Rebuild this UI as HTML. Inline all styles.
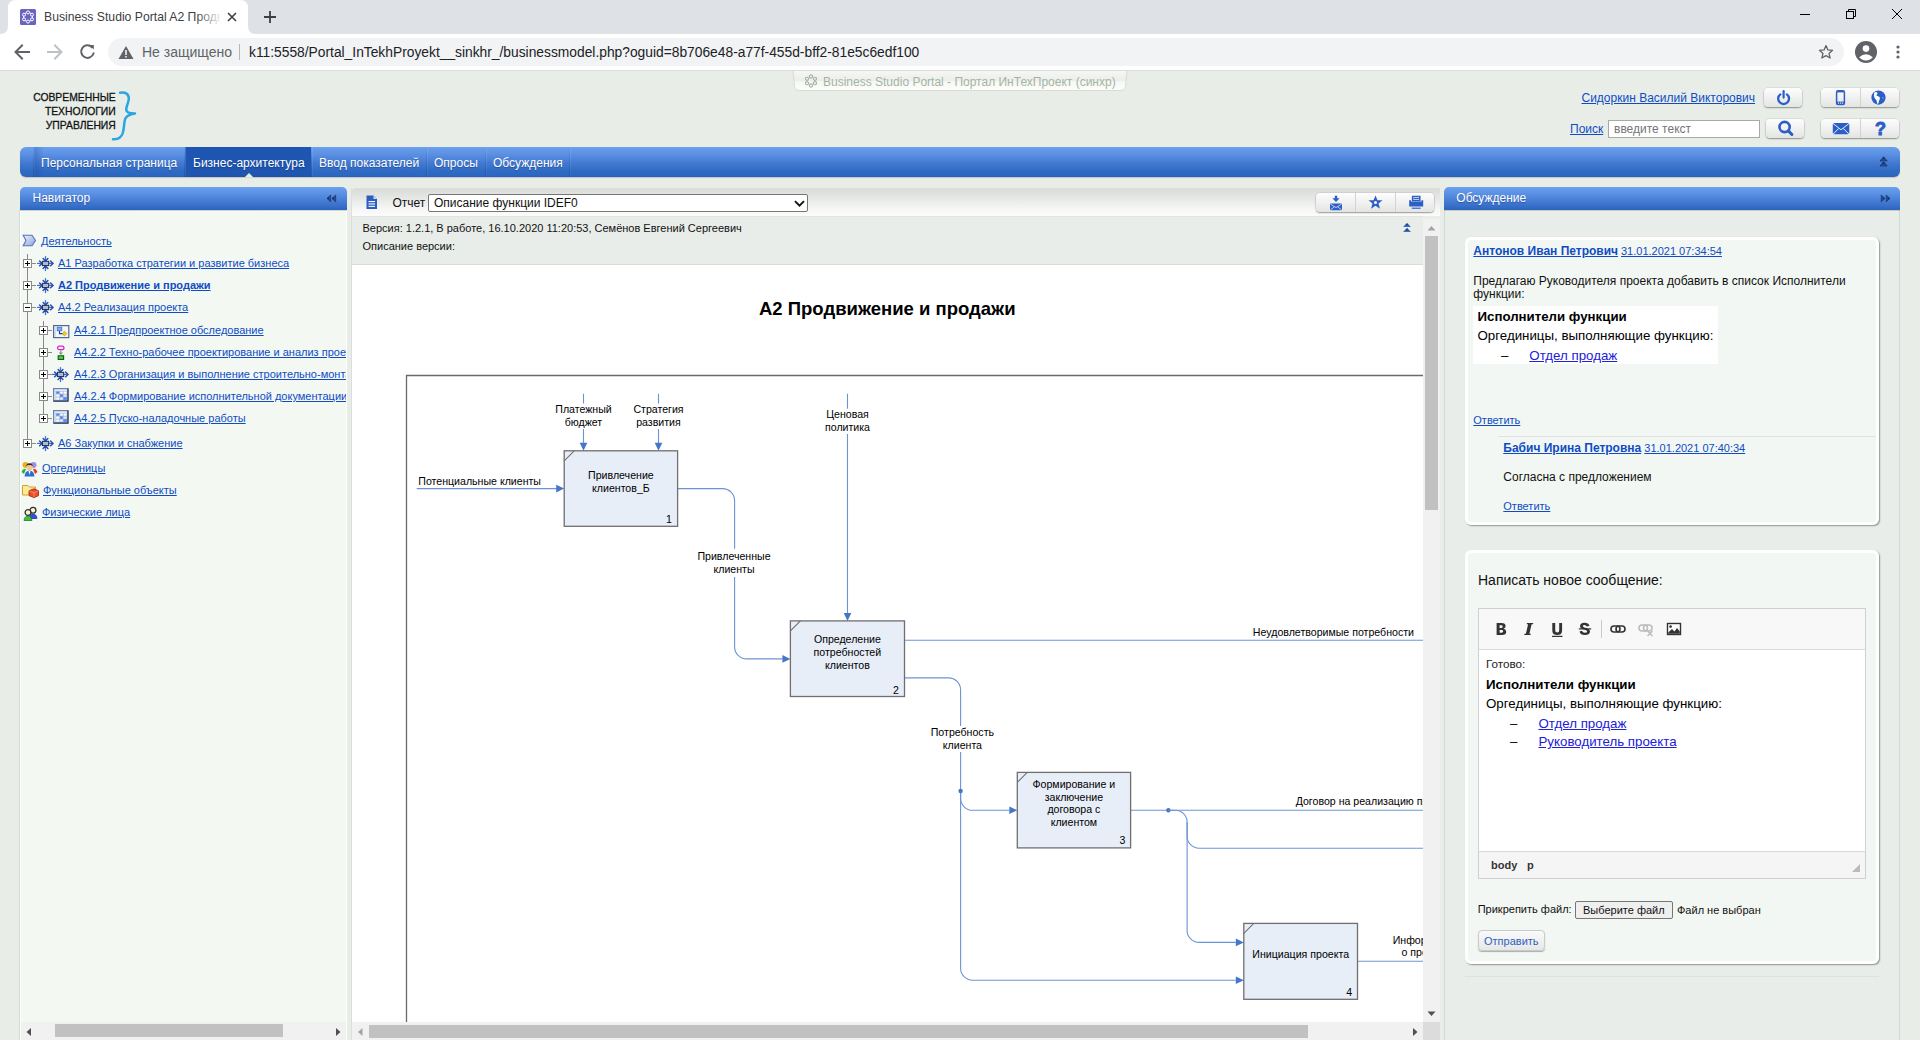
<!DOCTYPE html><html><head><meta charset="utf-8"><title>Business Studio Portal</title><style>
*{margin:0;padding:0;box-sizing:border-box}
html,body{width:1920px;height:1040px;overflow:hidden;background:#e8ede8;font-family:"Liberation Sans",sans-serif}
.t{position:absolute;white-space:nowrap}
.r{position:absolute}
.u{text-decoration:underline}
svg{position:absolute;overflow:visible}
</style></head><body>
<div class="r" style="left:0px;top:0px;width:1920px;height:34px;background:#dee1e6"></div>
<svg style="left:0;top:0" width="260" height="35"><path d="M0 34 Q8 34 8 26 L8 8 Q8 0 16 0 L240 0 Q248 0 248 8 L248 26 Q248 34 256 34 Z" fill="#fff"/></svg>
<svg style="left:20px;top:9px" width="16" height="16" viewBox="0 0 16 16"><rect x="0" y="0" width="16" height="16" rx="1.5" fill="#6a63c0"/>
<g fill="#6a63c0" stroke="#fff" stroke-width="1"><circle cx="8" cy="8" r="4.6" fill="none"/><circle cx="8" cy="3.4" r="1.5"/><circle cx="8" cy="12.6" r="1.5"/><circle cx="4" cy="5.7" r="1.5"/><circle cx="12" cy="5.7" r="1.5"/><circle cx="4" cy="10.3" r="1.5"/><circle cx="12" cy="10.3" r="1.5"/></g></svg>
<div class="t" style="left:44px;top:9px;width:176px;overflow:hidden;font-size:12.2px;line-height:16px;color:#3c4043">Business Studio Portal A2 Продвижение</div>
<div class="r" style="left:196px;top:5px;width:26px;height:22px;background:linear-gradient(90deg,rgba(255,255,255,0),#fff)"></div>
<svg style="left:227px;top:12px" width="10" height="10"><path d="M1 1 L9 9 M9 1 L1 9" stroke="#3c4043" stroke-width="1.6"/></svg>
<svg style="left:263px;top:10px" width="14" height="14"><path d="M7 1 V13 M1 7 H13" stroke="#3c4043" stroke-width="1.8"/></svg>
<svg style="left:1795px;top:5px" width="115" height="22"><g stroke="#000" stroke-width="1" fill="none">
<path d="M5 9.5 H15"/>
<rect x="51.5" y="6.5" width="7" height="7"/><path d="M53.5 6.5 V4.5 H60.5 V11.5 H58.5"/>
<path d="M97 4 L107 14 M107 4 L97 14"/></g></svg>
<div class="r" style="left:0px;top:34px;width:1920px;height:37px;background:#fff"></div>
<div class="r" style="left:0px;top:70px;width:1920px;height:1px;background:#dadce0"></div>
<svg style="left:12px;top:42px" width="90" height="20"><g fill="none" stroke-width="2" stroke-linecap="square">
<path d="M4 10 H17 M10 3.5 L3.5 10 L10 16.5" stroke="#5f6368"/>
<path d="M36 10 H49 M43 3.5 L49.5 10 L43 16.5" stroke="#bdc1c6"/>
<path d="M80 5.2 A6.3 6.3 0 1 0 81.5 11.5" stroke="#5f6368"/></g>
<path d="M77 3 L81.5 3 L81.5 7.5 Z" fill="#5f6368" transform="translate(0.3,0)"/></svg>
<div class="r" style="left:108px;top:38px;width:1736px;height:28px;background:#f1f3f4;border-radius:14px"></div>
<svg style="left:118px;top:45px" width="16" height="15"><path d="M8 1 L15.5 14 H0.5 Z" fill="#5f6368"/><rect x="7.2" y="5" width="1.6" height="5" fill="#f1f3f4"/><rect x="7.2" y="11" width="1.6" height="1.6" fill="#f1f3f4"/></svg>
<div class="t " style="left:142px;top:44px;font-size:14px;line-height:17px;color:#5f6368;font-weight:normal;">Не защищено</div>
<div class="r" style="left:239px;top:44px;width:1px;height:16px;background:#b4b8bc"></div>
<div class="t " style="left:249px;top:45px;font-size:13.8px;line-height:16px;color:#202124;font-weight:normal;">k11:5558/Portal_InTekhProyekt__sinkhr_/businessmodel.php?oguid=8b706e48-a77f-455d-bff2-81e5c6edf100</div>
<svg style="left:1818px;top:44px" width="16" height="16" viewBox="0 0 16 16"><path d="M8 1.6 L9.9 5.9 L14.6 6.3 L11 9.4 L12.1 14 L8 11.6 L3.9 14 L5 9.4 L1.4 6.3 L6.1 5.9 Z" fill="none" stroke="#5f6368" stroke-width="1.3" stroke-linejoin="round"/></svg>
<svg style="left:1855px;top:41px" width="22" height="22" viewBox="0 0 22 22"><circle cx="11" cy="11" r="11" fill="#5f6368"/><circle cx="11" cy="7.6" r="3.3" fill="#fff"/><path d="M4.2 16.2 Q11 10.5 17.8 16.2 Q15.5 19.3 11 19.4 Q6.5 19.3 4.2 16.2 Z" fill="#fff"/></svg>
<svg style="left:1895px;top:44px" width="6" height="16"><circle cx="3" cy="3" r="1.6" fill="#5f6368"/><circle cx="3" cy="8" r="1.6" fill="#5f6368"/><circle cx="3" cy="13" r="1.6" fill="#5f6368"/></svg>
<div class="t " style="right:1804px;text-align:right;top:90px;font-size:11.5px;line-height:14px;color:#111;font-weight:normal;transform:scaleX(0.9);transform-origin:100% 50%;-webkit-text-stroke:0.3px #111;">СОВРЕМЕННЫЕ</div>
<div class="t " style="right:1804px;text-align:right;top:104px;font-size:11.5px;line-height:14px;color:#111;font-weight:normal;transform:scaleX(0.9);transform-origin:100% 50%;-webkit-text-stroke:0.3px #111;">ТЕХНОЛОГИИ</div>
<div class="t " style="right:1804px;text-align:right;top:118px;font-size:11.5px;line-height:14px;color:#111;font-weight:normal;transform:scaleX(0.9);transform-origin:100% 50%;-webkit-text-stroke:0.3px #111;">УПРАВЛЕНИЯ</div>
<svg style="left:108px;top:88px" width="32" height="56" viewBox="0 0 32 56"><path d="M12 4.8 C17.5 3.8 20.8 6 20.8 10.5 C20.8 14 18.8 17.5 18.3 20.5 C17.8 24 20 25.3 27 25.5 C20.5 26.5 17.6 28.5 16.8 32 C16 36 16 41 14.8 45 C13.6 49 10.5 51.5 5 51.2" fill="none" stroke="#2aa6e3" stroke-width="2.5" stroke-linecap="round" stroke-linejoin="round"/></svg>
<svg style="left:792px;top:70px" width="338" height="23"><defs><linearGradient id="tg" x1="0" y1="0" x2="0" y2="1"><stop offset="0" stop-color="#f6f7f4"/><stop offset="0.5" stop-color="#eceeea"/><stop offset="0.55" stop-color="#f7f8f6"/><stop offset="1" stop-color="#fdfdfc"/></linearGradient></defs>
<path d="M1 1 L2.5 17 Q3 20.5 7 20.5 L329 20.5 Q333 20.5 333.5 17 L335 1" fill="url(#tg)" stroke="#d6dbd3" stroke-width="1"/></svg>
<svg style="left:804px;top:74px" width="14" height="14" viewBox="0 0 14 14"><g fill="none" stroke="#a2b4a0" stroke-width="1.1"><circle cx="7" cy="2.5" r="1.6"/><circle cx="7" cy="11.5" r="1.6"/><circle cx="3" cy="4.8" r="1.6"/><circle cx="11" cy="4.8" r="1.6"/><circle cx="3" cy="9.2" r="1.6"/><circle cx="11" cy="9.2" r="1.6"/></g></svg>
<div class="t " style="left:823px;top:75px;font-size:12px;line-height:14px;color:#a3b5a2;font-weight:normal;">Business Studio Portal - Портал ИнТехПроект (синхр)</div>
<div class="t u" style="left:1581.5px;top:91px;font-size:12px;line-height:14px;color:#0f4cc4;font-weight:normal;">Сидоркин Василий Викторович</div>
<div class="t u" style="left:1570px;top:122px;font-size:12px;line-height:14px;color:#0f4cc4;font-weight:normal;">Поиск</div>
<div class="r" style="left:1608px;top:120px;width:152px;height:18px;background:#fff;border:1px solid #a9a9a9;"></div>
<div class="t " style="left:1614px;top:122px;font-size:12px;line-height:14px;color:#757575;font-weight:normal;">введите текст</div>
<div class="r" style="left:1764px;top:88px;width:38px;height:19px;background:linear-gradient(#fdfdfd,#e3e5e3);border-radius:4px;box-shadow:0 1px 1.5px rgba(0,0,0,.35),0 0 0 0.5px rgba(0,0,0,.12);"></div>
<div class="r" style="left:1821px;top:88px;width:78px;height:19px;background:linear-gradient(#fdfdfd,#e3e5e3);border-radius:4px;box-shadow:0 1px 1.5px rgba(0,0,0,.35),0 0 0 0.5px rgba(0,0,0,.12);"></div>
<div class="r" style="left:1860px;top:88px;width:1px;height:19px;background:#fff;border-left:1px solid #d0d3d0"></div>
<div class="r" style="left:1766px;top:119px;width:38px;height:19px;background:linear-gradient(#fdfdfd,#e3e5e3);border-radius:4px;box-shadow:0 1px 1.5px rgba(0,0,0,.35),0 0 0 0.5px rgba(0,0,0,.12);"></div>
<div class="r" style="left:1821px;top:119px;width:78px;height:19px;background:linear-gradient(#fdfdfd,#e3e5e3);border-radius:4px;box-shadow:0 1px 1.5px rgba(0,0,0,.35),0 0 0 0.5px rgba(0,0,0,.12);"></div>
<div class="r" style="left:1860px;top:119px;width:1px;height:19px;background:#fff;border-left:1px solid #d0d3d0"></div>
<svg style="left:1775px;top:89px" width="17" height="17" viewBox="0 0 17 17"><path d="M5.3 5.4 A5.4 5.4 0 1 0 11.9 5.4" fill="none" stroke="#2b5fc7" stroke-width="2.3" stroke-linecap="round"/><path d="M8.6 2.2 V8.6" stroke="#2b5fc7" stroke-width="2.2" stroke-linecap="round"/></svg>
<svg style="left:1835px;top:89px" width="11" height="17" viewBox="0 0 11 17"><rect x="1.6" y="1.8" width="7.8" height="13.7" rx="1.6" fill="none" stroke="#2b5fc7" stroke-width="1.5"/><rect x="1.6" y="1.8" width="7.8" height="1.6" fill="#2b5fc7"/><rect x="1.6" y="12.6" width="7.8" height="2.9" fill="#2b5fc7"/><g fill="#fff"><rect x="3" y="13.6" width="1.1" height="1"/><rect x="5" y="13.6" width="1.1" height="1"/><rect x="7" y="13.6" width="1.1" height="1"/></g></svg>
<svg style="left:1870px;top:89px" width="17" height="17" viewBox="0 0 17 17"><circle cx="8.5" cy="8.6" r="7.1" fill="#2b5fc7"/><path d="M4.6 3.2 Q6.8 2.8 7.6 4.2 Q7.2 5.6 6.2 6.3 Q7.5 7.2 8.8 7.6 Q10.6 8.5 9.8 10.3 Q8.8 11.6 8.6 13.4 Q8.1 14.8 7.6 15.3 Q6.6 13.2 6.6 11.2 Q5.2 9.8 4.4 8.4 Q3.6 6.6 4.1 4.6 Z" fill="#fff"/><path d="M12.6 7.8 Q13.6 8.6 13.2 10 Q12.4 9.4 12.6 7.8 Z" fill="#fff"/></svg>
<svg style="left:1776px;top:119px" width="19" height="19" viewBox="0 0 19 19"><circle cx="8.6" cy="8" r="5.1" fill="none" stroke="#2b5fc7" stroke-width="2.6"/><path d="M12.4 11.9 L15.9 15.5" stroke="#2b5fc7" stroke-width="3" stroke-linecap="round"/></svg>
<svg style="left:1832px;top:122px" width="18" height="14" viewBox="0 0 18 14"><rect x="0.8" y="1" width="16.5" height="11.3" rx="1.5" fill="#2b5fc7"/><path d="M1.2 1.6 L9 7.8 L16.9 1.6 M1.3 12 L6.6 6.5 M16.8 12 L11.4 6.5" fill="none" stroke="#fff" stroke-width="0.9"/></svg>
<div class="t " style="left:1875px;top:119px;font-size:18px;line-height:21px;color:#2b5fc7;font-weight:bold;-webkit-text-stroke:0.9px #2b5fc7;">?</div>
<div class="r" style="left:20px;top:147px;width:1880px;height:30px;background:linear-gradient(#6aa0ee 0%,#5a8fe2 25%,#4279d0 55%,#2f6bc3 80%,#2b66c0 96%,#2160c8 100%);border-radius:6px;box-shadow:0 1px 1px rgba(90,80,40,.25)"></div>
<div class="r" style="left:185px;top:147px;width:126px;height:30px;background:linear-gradient(#1f55b2,#1e56b0 90%,#1d52ac)"></div>
<svg style="left:244px;top:172px" width="10" height="6"><path d="M0.5 5.5 L5 1 L9.5 5.5 Z" fill="#e8ede8"/></svg>
<div class="r" style="left:33px;top:147px;width:1px;height:30px;background:linear-gradient(rgba(40,80,160,.0),rgba(30,70,150,.45))"></div>
<div class="r" style="left:34px;top:147px;width:1px;height:30px;background:linear-gradient(rgba(140,180,240,.35),rgba(100,150,220,.15))"></div>
<div class="r" style="left:184px;top:147px;width:1px;height:30px;background:linear-gradient(rgba(40,80,160,.0),rgba(30,70,150,.45))"></div>
<div class="r" style="left:185px;top:147px;width:1px;height:30px;background:linear-gradient(rgba(140,180,240,.35),rgba(100,150,220,.15))"></div>
<div class="r" style="left:311px;top:147px;width:1px;height:30px;background:linear-gradient(rgba(40,80,160,.0),rgba(30,70,150,.45))"></div>
<div class="r" style="left:312px;top:147px;width:1px;height:30px;background:linear-gradient(rgba(140,180,240,.35),rgba(100,150,220,.15))"></div>
<div class="r" style="left:426px;top:147px;width:1px;height:30px;background:linear-gradient(rgba(40,80,160,.0),rgba(30,70,150,.45))"></div>
<div class="r" style="left:427px;top:147px;width:1px;height:30px;background:linear-gradient(rgba(140,180,240,.35),rgba(100,150,220,.15))"></div>
<div class="r" style="left:485px;top:147px;width:1px;height:30px;background:linear-gradient(rgba(40,80,160,.0),rgba(30,70,150,.45))"></div>
<div class="r" style="left:486px;top:147px;width:1px;height:30px;background:linear-gradient(rgba(140,180,240,.35),rgba(100,150,220,.15))"></div>
<div class="r" style="left:569px;top:147px;width:1px;height:30px;background:linear-gradient(rgba(40,80,160,.0),rgba(30,70,150,.45))"></div>
<div class="r" style="left:570px;top:147px;width:1px;height:30px;background:linear-gradient(rgba(140,180,240,.35),rgba(100,150,220,.15))"></div>
<div class="r" style="left:34px;top:147px;width:10px;height:30px;background:linear-gradient(90deg,rgba(20,60,150,.28),rgba(20,60,150,0))"></div>
<div class="t " style="left:41px;top:156px;font-size:12px;line-height:14px;color:#fff;font-weight:normal;text-shadow:0 1px 1px rgba(0,20,80,.35)">Персональная страница</div>
<div class="t " style="left:193px;top:156px;font-size:12px;line-height:14px;color:#fff;font-weight:normal;text-shadow:0 1px 1px rgba(0,20,80,.35)">Бизнес-архитектура</div>
<div class="t " style="left:319px;top:156px;font-size:12px;line-height:14px;color:#fff;font-weight:normal;text-shadow:0 1px 1px rgba(0,20,80,.35)">Ввод показателей</div>
<div class="t " style="left:434px;top:156px;font-size:12px;line-height:14px;color:#fff;font-weight:normal;text-shadow:0 1px 1px rgba(0,20,80,.35)">Опросы</div>
<div class="t " style="left:493px;top:156px;font-size:12px;line-height:14px;color:#fff;font-weight:normal;text-shadow:0 1px 1px rgba(0,20,80,.35)">Обсуждения</div>
<svg style="left:1879px;top:156px" width="10" height="12"><defs><linearGradient id="cu" x1="0" y1="0" x2="0" y2="1"><stop offset="0" stop-color="#0d1f44"/><stop offset="1" stop-color="#2a62c0"/></linearGradient></defs><path d="M1 5 L4.6 0.8 L8.2 5 Z" fill="url(#cu)" stroke="#12254d" stroke-width="0.6" stroke-linejoin="round"/><path d="M1 10 L4.6 5.8 L8.2 10 Z" fill="url(#cu)" stroke="#12254d" stroke-width="0.6" stroke-linejoin="round"/></svg>
<div class="r" style="left:20px;top:187px;width:327px;height:23px;background:linear-gradient(#6aa0ee 0%,#5a90e3 30%,#4479d2 65%,#3069c4 92%,#2a62c0 100%);border-radius:5px 5px 0 0"></div>
<div class="t " style="left:32.5px;top:191px;font-size:12px;line-height:14px;color:#fff;font-weight:normal;text-shadow:0 1px 1px rgba(0,20,80,.35)">Навигатор</div>
<svg style="left:325px;top:193px" width="14" height="11"><defs><linearGradient id="cl" x1="0" y1="0" x2="1" y2="0"><stop offset="0" stop-color="#0d1f44"/><stop offset="1" stop-color="#2a62c0"/></linearGradient></defs><path d="M2 5.4 L5.7 2 L5.7 8.8 Z" fill="url(#cl)" stroke="#12254d" stroke-width="0.6" stroke-linejoin="round"/><path d="M7 5.4 L10.7 2 L10.7 8.8 Z" fill="url(#cl)" stroke="#12254d" stroke-width="0.6" stroke-linejoin="round"/></svg>
<div class="r" style="left:19px;top:210px;width:328px;height:830px;background:#f3f8f3;border-left:1px solid #d5dad5;border-right:1px solid #fdfefd;box-shadow:inset 1px 0 0 #fff"></div>
<div class="r" style="left:20px;top:210px;width:327px;height:1px;background:linear-gradient(90deg,rgba(120,100,60,.28),rgba(120,100,60,.22))"></div>
<div class="r" style="left:351px;top:188px;width:1px;height:852px;background:#dcdedc"></div>
<svg style="left:22px;top:234px" width="15" height="13" viewBox="0 0 15 13"><defs><linearGradient id="dg" x1="0" y1="0" x2="1" y2="1"><stop offset="0" stop-color="#eef2fb"/><stop offset="1" stop-color="#8aa2d8"/></linearGradient></defs>
<path d="M1.2 1.2 H10 L13.5 6.5 L10 11.8 H1.2 L4 6.5 Z" fill="url(#dg)" stroke="#5573c0" stroke-width="1.1"/></svg>
<div class="t u" style="left:41px;top:235px;font-size:11px;line-height:13px;color:#0f4cc4;font-weight:normal;">Деятельность</div>
<div class="r" style="left:27px;top:254px;width:1px;height:185px;background:#8a8a8a"></div>
<div class="r" style="left:23px;top:259px;width:9px;height:9px;background:#fff;border:1px solid #8a8a8a"></div>
<div class="r" style="left:25px;top:263px;width:5px;height:1px;background:#000"></div>
<div class="r" style="left:27px;top:261px;width:1px;height:5px;background:#000"></div>
<div class="r" style="left:32px;top:263px;width:4px;height:1px;background:#8a8a8a"></div>
<svg style="left:37px;top:256px" width="17" height="16" viewBox="0 0 17 16">
<g fill="none" stroke-linecap="round" stroke-linejoin="round">
<path d="M0.6 7.4 H5 M8.5 0.6 V5 M8.5 14.6 V10 M12 7.4 H16" stroke="#3a72e2" stroke-width="1.3"/>
<path d="M2.6 5 L5 7.4 L2.6 9.8 M13.6 5 L16 7.4 L13.6 9.8 M6.1 2.6 L8.5 5 L10.9 2.6 M6.1 12.4 L8.5 10 L10.9 12.4" stroke="#2548b0" stroke-width="1.4"/>
</g>
<rect x="5.4" y="5.3" width="6.3" height="4.3" fill="#aabbdd" stroke="#26344f" stroke-width="1.1"/></svg>
<div class="t u" style="left:58px;top:257px;font-size:11px;line-height:13px;color:#0f4cc4;font-weight:normal;">А1 Разработка стратегии и развитие бизнеса</div>
<div class="r" style="left:23px;top:281px;width:9px;height:9px;background:#fff;border:1px solid #8a8a8a"></div>
<div class="r" style="left:25px;top:285px;width:5px;height:1px;background:#000"></div>
<div class="r" style="left:27px;top:283px;width:1px;height:5px;background:#000"></div>
<div class="r" style="left:32px;top:285px;width:4px;height:1px;background:#8a8a8a"></div>
<svg style="left:37px;top:278px" width="17" height="16" viewBox="0 0 17 16">
<g fill="none" stroke-linecap="round" stroke-linejoin="round">
<path d="M0.6 7.4 H5 M8.5 0.6 V5 M8.5 14.6 V10 M12 7.4 H16" stroke="#3a72e2" stroke-width="1.3"/>
<path d="M2.6 5 L5 7.4 L2.6 9.8 M13.6 5 L16 7.4 L13.6 9.8 M6.1 2.6 L8.5 5 L10.9 2.6 M6.1 12.4 L8.5 10 L10.9 12.4" stroke="#2548b0" stroke-width="1.4"/>
</g>
<rect x="5.4" y="5.3" width="6.3" height="4.3" fill="#aabbdd" stroke="#26344f" stroke-width="1.1"/></svg>
<div class="t u" style="left:58px;top:279px;font-size:11px;line-height:13px;color:#0f4cc4;font-weight:bold;">А2 Продвижение и продажи</div>
<div class="r" style="left:23px;top:303px;width:9px;height:9px;background:#fff;border:1px solid #8a8a8a"></div>
<div class="r" style="left:25px;top:307px;width:5px;height:1px;background:#000"></div>
<div class="r" style="left:32px;top:307px;width:4px;height:1px;background:#8a8a8a"></div>
<svg style="left:37px;top:300px" width="17" height="16" viewBox="0 0 17 16">
<g fill="none" stroke-linecap="round" stroke-linejoin="round">
<path d="M0.6 7.4 H5 M8.5 0.6 V5 M8.5 14.6 V10 M12 7.4 H16" stroke="#3a72e2" stroke-width="1.3"/>
<path d="M2.6 5 L5 7.4 L2.6 9.8 M13.6 5 L16 7.4 L13.6 9.8 M6.1 2.6 L8.5 5 L10.9 2.6 M6.1 12.4 L8.5 10 L10.9 12.4" stroke="#2548b0" stroke-width="1.4"/>
</g>
<rect x="5.4" y="5.3" width="6.3" height="4.3" fill="#aabbdd" stroke="#26344f" stroke-width="1.1"/></svg>
<div class="t u" style="left:58px;top:301px;font-size:11px;line-height:13px;color:#0f4cc4;font-weight:normal;">А4.2 Реализация проекта</div>
<div class="r" style="left:43px;top:321px;width:1px;height:93px;background:#8a8a8a"></div>
<div class="r" style="left:39px;top:326px;width:9px;height:9px;background:#fff;border:1px solid #8a8a8a"></div>
<div class="r" style="left:41px;top:330px;width:5px;height:1px;background:#000"></div>
<div class="r" style="left:43px;top:328px;width:1px;height:5px;background:#000"></div>
<div class="r" style="left:48px;top:330px;width:4px;height:1px;background:#8a8a8a"></div>
<svg style="left:53px;top:325px" width="17" height="14" viewBox="0 0 17 14"><rect x="0.6" y="0.6" width="15.2" height="12" fill="#f2f6fd" stroke="#56678a" stroke-width="1.2"/><rect x="1.6" y="1.4" width="1.1" height="10.4" fill="#c9d3e6"/>
<rect x="4.2" y="2.2" width="4.6" height="3.6" fill="#7fb0ec" stroke="#3f72c8" stroke-width="0.8"/><path d="M6.5 6 V8.6 H10" fill="none" stroke="#1f3a90" stroke-width="1.1"/><path d="M11.5 6.3 L13.8 8.6 L11.5 10.9 L9.2 8.6 Z" fill="#f5d020" stroke="#b88a00" stroke-width="0.7"/></svg>
<div class="t u" style="left:74px;top:324px;width:272px;overflow:hidden;font-size:11px;line-height:13px;color:#0f4cc4">А4.2.1 Предпроектное обследование</div>
<div class="r" style="left:39px;top:348px;width:9px;height:9px;background:#fff;border:1px solid #8a8a8a"></div>
<div class="r" style="left:41px;top:352px;width:5px;height:1px;background:#000"></div>
<div class="r" style="left:43px;top:350px;width:1px;height:5px;background:#000"></div>
<div class="r" style="left:48px;top:352px;width:4px;height:1px;background:#8a8a8a"></div>
<svg style="left:56px;top:345px" width="10" height="16" viewBox="0 0 10 16"><rect x="1.6" y="1.2" width="6.4" height="3.4" rx="1.7" fill="#fff" stroke="#e020d0" stroke-width="1.3"/><path d="M4.8 5 V9" stroke="#a0a0a0" stroke-width="1.3"/><path d="M2.6 7.6 L7 7.6 L4.8 10 Z" fill="#909090"/><rect x="2.2" y="10.8" width="5.4" height="3.6" fill="#50d050" stroke="#0a5a0a" stroke-width="1.1"/></svg>
<div class="t u" style="left:74px;top:346px;width:272px;overflow:hidden;font-size:11px;line-height:13px;color:#0f4cc4">А4.2.2 Техно-рабочее проектирование и анализ проектной документации</div>
<div class="r" style="left:39px;top:370px;width:9px;height:9px;background:#fff;border:1px solid #8a8a8a"></div>
<div class="r" style="left:41px;top:374px;width:5px;height:1px;background:#000"></div>
<div class="r" style="left:43px;top:372px;width:1px;height:5px;background:#000"></div>
<div class="r" style="left:48px;top:374px;width:4px;height:1px;background:#8a8a8a"></div>
<svg style="left:52px;top:367px" width="17" height="16" viewBox="0 0 17 16">
<g fill="none" stroke-linecap="round" stroke-linejoin="round">
<path d="M0.6 7.4 H5 M8.5 0.6 V5 M8.5 14.6 V10 M12 7.4 H16" stroke="#3a72e2" stroke-width="1.3"/>
<path d="M2.6 5 L5 7.4 L2.6 9.8 M13.6 5 L16 7.4 L13.6 9.8 M6.1 2.6 L8.5 5 L10.9 2.6 M6.1 12.4 L8.5 10 L10.9 12.4" stroke="#2548b0" stroke-width="1.4"/>
</g>
<rect x="5.4" y="5.3" width="6.3" height="4.3" fill="#aabbdd" stroke="#26344f" stroke-width="1.1"/></svg>
<div class="t u" style="left:74px;top:368px;width:272px;overflow:hidden;font-size:11px;line-height:13px;color:#0f4cc4">А4.2.3 Организация и выполнение строительно-монтажных работ</div>
<div class="r" style="left:39px;top:392px;width:9px;height:9px;background:#fff;border:1px solid #8a8a8a"></div>
<div class="r" style="left:41px;top:396px;width:5px;height:1px;background:#000"></div>
<div class="r" style="left:43px;top:394px;width:1px;height:5px;background:#000"></div>
<div class="r" style="left:48px;top:396px;width:4px;height:1px;background:#8a8a8a"></div>
<svg style="left:53px;top:388px" width="16" height="14" viewBox="0 0 16 14"><rect x="0.5" y="0.5" width="14.5" height="12.6" fill="#9fb1d4" stroke="#6f82a8" stroke-width="1"/><path d="M15 0.5 V13.1 H0.5" fill="none" stroke="#2f3f60" stroke-width="1.2"/><rect x="1.5" y="1.5" width="12.5" height="1.3" fill="#f4f7fc"/><rect x="1.5" y="3.2" width="1" height="8.8" fill="#fff"/>
<g fill="#fff"><rect x="3.2" y="3.5" width="3.2" height="2.2"/><rect x="7.2" y="3.5" width="2.5" height="2.2"/><rect x="10.5" y="3.5" width="3.2" height="2.2"/><rect x="3.2" y="6.5" width="3.2" height="2.2"/><rect x="10.5" y="6.5" width="3.2" height="2.2" fill="#dfe8f8"/><rect x="3.2" y="9.5" width="3.2" height="2.2"/><rect x="7.2" y="9.5" width="2.5" height="2.2" fill="#e6eefc"/></g>
<g fill="#4f86ec"><rect x="3.2" y="3.5" width="3.2" height="2.2"/><rect x="7.2" y="6.5" width="2.5" height="2.2"/><rect x="10.5" y="9.5" width="3.2" height="2.2"/></g></svg>
<div class="t u" style="left:74px;top:390px;width:272px;overflow:hidden;font-size:11px;line-height:13px;color:#0f4cc4">А4.2.4 Формирование исполнительной документации</div>
<div class="r" style="left:39px;top:414px;width:9px;height:9px;background:#fff;border:1px solid #8a8a8a"></div>
<div class="r" style="left:41px;top:418px;width:5px;height:1px;background:#000"></div>
<div class="r" style="left:43px;top:416px;width:1px;height:5px;background:#000"></div>
<div class="r" style="left:48px;top:418px;width:4px;height:1px;background:#8a8a8a"></div>
<svg style="left:53px;top:410px" width="16" height="14" viewBox="0 0 16 14"><rect x="0.5" y="0.5" width="14.5" height="12.6" fill="#9fb1d4" stroke="#6f82a8" stroke-width="1"/><path d="M15 0.5 V13.1 H0.5" fill="none" stroke="#2f3f60" stroke-width="1.2"/><rect x="1.5" y="1.5" width="12.5" height="1.3" fill="#f4f7fc"/><rect x="1.5" y="3.2" width="1" height="8.8" fill="#fff"/>
<g fill="#fff"><rect x="3.2" y="3.5" width="3.2" height="2.2"/><rect x="7.2" y="3.5" width="2.5" height="2.2"/><rect x="10.5" y="3.5" width="3.2" height="2.2"/><rect x="3.2" y="6.5" width="3.2" height="2.2"/><rect x="10.5" y="6.5" width="3.2" height="2.2" fill="#dfe8f8"/><rect x="3.2" y="9.5" width="3.2" height="2.2"/><rect x="7.2" y="9.5" width="2.5" height="2.2" fill="#e6eefc"/></g>
<g fill="#4f86ec"><rect x="3.2" y="3.5" width="3.2" height="2.2"/><rect x="7.2" y="6.5" width="2.5" height="2.2"/><rect x="10.5" y="9.5" width="3.2" height="2.2"/></g></svg>
<div class="t u" style="left:74px;top:412px;width:272px;overflow:hidden;font-size:11px;line-height:13px;color:#0f4cc4">А4.2.5 Пуско-наладочные работы</div>
<div class="r" style="left:23px;top:439px;width:9px;height:9px;background:#fff;border:1px solid #8a8a8a"></div>
<div class="r" style="left:25px;top:443px;width:5px;height:1px;background:#000"></div>
<div class="r" style="left:27px;top:441px;width:1px;height:5px;background:#000"></div>
<div class="r" style="left:32px;top:443px;width:4px;height:1px;background:#8a8a8a"></div>
<svg style="left:37px;top:436px" width="17" height="16" viewBox="0 0 17 16">
<g fill="none" stroke-linecap="round" stroke-linejoin="round">
<path d="M0.6 7.4 H5 M8.5 0.6 V5 M8.5 14.6 V10 M12 7.4 H16" stroke="#3a72e2" stroke-width="1.3"/>
<path d="M2.6 5 L5 7.4 L2.6 9.8 M13.6 5 L16 7.4 L13.6 9.8 M6.1 2.6 L8.5 5 L10.9 2.6 M6.1 12.4 L8.5 10 L10.9 12.4" stroke="#2548b0" stroke-width="1.4"/>
</g>
<rect x="5.4" y="5.3" width="6.3" height="4.3" fill="#aabbdd" stroke="#26344f" stroke-width="1.1"/></svg>
<div class="t u" style="left:58px;top:437px;font-size:11px;line-height:13px;color:#0f4cc4;font-weight:normal;">А6 Закупки и снабжение</div>
<svg style="left:21px;top:461px" width="17" height="16" viewBox="0 0 17 16"><circle cx="4.5" cy="4" r="3" fill="#e8b020"/><circle cx="12.5" cy="4" r="3" fill="#a090e0"/><path d="M0.5 11 Q2 7 5 8 L3 13 Z" fill="#30b030"/><path d="M16.5 11 Q15 7 12 8 L14 13 Z" fill="#e04020"/>
<path d="M3.5 15.5 Q4 9.5 8.5 9.5 Q13 9.5 13.5 15.5 Z" fill="#2a70d0"/><circle cx="8.5" cy="6" r="3.3" fill="#f6c890"/><path d="M5.2 5.5 Q5.5 2 8.5 2.2 Q11.5 2 11.8 5.5 Q10 3.8 8.5 4.2 Q7 3.8 5.2 5.5 Z" fill="#303030"/><path d="M7.5 10 L8.5 14 L9.5 10 Z" fill="#fff"/></svg>
<div class="t u" style="left:42px;top:462px;font-size:11px;line-height:13px;color:#0f4cc4;font-weight:normal;">Оргединицы</div>
<svg style="left:22px;top:484px" width="19" height="15" viewBox="0 0 19 15"><path d="M0.5 1.5 H6 L7.5 3 H13.5 V11 H0.5 Z" fill="#fce9a0" stroke="#d8a020" stroke-width="1"/><path d="M7 6.8 L12 4.8 L16.5 6.8 V11.6 L12 13.6 L7 11.6 Z" fill="#e8502a" stroke="#a82810" stroke-width="0.9"/><path d="M7.2 6.9 L12 8.9 L16.3 6.9 M12 8.9 V13.4" fill="none" stroke="#ff9a70" stroke-width="0.8"/></svg>
<div class="t u" style="left:43px;top:484px;font-size:11px;line-height:13px;color:#0f4cc4;font-weight:normal;">Функциональные объекты</div>
<svg style="left:23px;top:506px" width="15" height="15" viewBox="0 0 15 15"><path d="M6.5 12.5 Q7 8 10 8 Q13.5 8 14 12.5 Z" fill="#2a50e8" stroke="#1a3090" stroke-width="0.7"/><circle cx="10" cy="4.2" r="2.9" fill="#f8f4d8" stroke="#303030" stroke-width="1.3"/>
<path d="M1 14.5 Q1.5 10 5 10 Q8.5 10 9 14.5 Z" fill="#40c040" stroke="#1a6a1a" stroke-width="0.7"/><circle cx="5" cy="6.5" r="2.9" fill="#f8f4d8" stroke="#303030" stroke-width="1.3"/></svg>
<div class="t u" style="left:42px;top:506px;font-size:11px;line-height:13px;color:#0f4cc4;font-weight:normal;">Физические лица</div>
<div class="r" style="left:21px;top:1022px;width:325px;height:18px;background:#f1f1f1"></div>
<div class="r" style="left:55px;top:1024px;width:228px;height:13px;background:#c1c1c1"></div>
<svg style="left:25px;top:1027px" width="8" height="10"><path d="M6 1 L1.5 5 L6 9 Z" fill="#505050"/></svg>
<svg style="left:334px;top:1027px" width="8" height="10"><path d="M2 1 L6.5 5 L2 9 Z" fill="#505050"/></svg>
<div class="r" style="left:352px;top:188px;width:1088px;height:28px;background:linear-gradient(#d9dcd9 0%,#e6e8e6 35%,#f6f7f6 75%,#fbfbfb 100%);border-top:1px solid #dcdedc;border-radius:4px 0 0 0"></div>
<div class="r" style="left:352px;top:216px;width:1071px;height:48px;background:#e9ede9;border-top:1px solid #e2e5e2"></div>
<div class="r" style="left:352px;top:264px;width:1071px;height:1px;background:#d9ddd9"></div>
<svg style="left:366px;top:195px" width="12" height="15" viewBox="0 0 12 15"><path d="M0.5 0.5 H7.5 L11 4 V14 H0.5 Z" fill="#2a5ec4"/><path d="M7.5 0.5 V4 H11" fill="#cfdcf5"/><rect x="2.5" y="6" width="6.5" height="1.1" fill="#fff"/><rect x="2.5" y="8.4" width="6.5" height="1.1" fill="#fff"/><rect x="2.5" y="10.8" width="6.5" height="1.1" fill="#fff"/></svg>
<div class="t " style="left:392.5px;top:196px;font-size:12px;line-height:14px;color:#111;font-weight:normal;">Отчет</div>
<div class="r" style="left:428px;top:194px;width:380px;height:18px;background:#fff;border:1px solid #767676;border-radius:2px"></div>
<div class="t " style="left:434px;top:196px;font-size:12px;line-height:14px;color:#111;font-weight:normal;">Описание функции IDEF0</div>
<svg style="left:794px;top:200px" width="11" height="8"><path d="M1 1.2 L5.5 5.7 L10 1.2" fill="none" stroke="#111" stroke-width="1.9"/></svg>
<div class="r" style="left:1316px;top:193px;width:118px;height:19px;background:linear-gradient(#fdfdfd,#e3e5e3);border-radius:4px;box-shadow:0 1px 1.5px rgba(0,0,0,.35),0 0 0 0.5px rgba(0,0,0,.12);"></div>
<div class="r" style="left:1355px;top:193px;width:1px;height:19px;background:#fff;border-left:1px solid #d0d3d0"></div>
<div class="r" style="left:1395px;top:193px;width:1px;height:19px;background:#fff;border-left:1px solid #d0d3d0"></div>
<svg style="left:1329px;top:195px" width="14" height="16" viewBox="0 0 14 16"><path d="M5.8 0.8 H8.2 V3.2 H10.6 L7 7 L3.4 3.2 H5.8 Z" fill="#2b5fc7"/><rect x="1" y="8.6" width="12" height="6.6" rx="1" fill="#2b5fc7"/><path d="M1.6 9.2 L7 12.6 L12.4 9.2 M1.6 14.8 L5 12 M12.4 14.8 L9 12" fill="none" stroke="#cfdcf4" stroke-width="0.9"/></svg>
<svg style="left:1368px;top:195px" width="15" height="15" viewBox="0 0 15 15"><path d="M7.5 0.5 L9.5 5.3 L14.5 5.3 L10.5 8.6 L12 13.8 L7.5 10.8 L3 13.8 L4.5 8.6 L0.5 5.3 L5.5 5.3 Z" fill="#2b5fc7"/><circle cx="7.5" cy="7.6" r="1.5" fill="#fff"/></svg>
<svg style="left:1408px;top:195px" width="16" height="15" viewBox="0 0 16 15"><path d="M4.6 1.4 H11.8 V5.6 H4.6 Z" fill="none" stroke="#2b5fc7" stroke-width="1.5"/><rect x="5.5" y="3" width="5.4" height="1" fill="#2b5fc7"/><path d="M1.2 5.2 H3 V6.6 H13.4 V5.2 H15.2 V11.6 H1.2 Z" fill="#2b5fc7"/><rect x="3.8" y="12.6" width="8.8" height="1.2" fill="#2b5fc7"/></svg>
<div class="t " style="left:362.5px;top:222px;font-size:11px;line-height:13px;color:#111;font-weight:normal;">Версия: 1.2.1, В работе, 16.10.2020 11:20:53, Семёнов Евгений Сергеевич</div>
<div class="t " style="left:362.5px;top:240px;font-size:11px;line-height:13px;color:#111;font-weight:normal;">Описание версии:</div>
<svg style="left:1402px;top:222px" width="10" height="11"><defs><linearGradient id="ch" x1="0" y1="0" x2="0" y2="1"><stop offset="0" stop-color="#0c2250"/><stop offset="1" stop-color="#3c7ce0"/></linearGradient></defs><path d="M1 5 L5 1 L9 5 Z" fill="url(#ch)"/><path d="M1 10 L5 6 L9 10 Z" fill="url(#ch)"/></svg>
<div class="r" style="left:352px;top:265px;width:1071px;height:757px;background:#fff"></div>
<div class="r" style="left:1423px;top:219px;width:17px;height:803px;background:#f1f1f1"></div>
<div class="r" style="left:1425px;top:236px;width:13px;height:274px;background:#c1c1c1"></div>
<svg style="left:1427px;top:225px" width="10" height="7"><path d="M0.5 5.5 L4.5 1 L8.5 5.5 Z" fill="#a3a3a3"/></svg>
<svg style="left:1427px;top:1011px" width="10" height="7"><path d="M0.5 0.5 L4.5 5 L8.5 0.5 Z" fill="#505050"/></svg>
<div class="r" style="left:352px;top:1022px;width:1071px;height:18px;background:#f1f1f1"></div>
<div class="r" style="left:369px;top:1025px;width:939px;height:13px;background:#c1c1c1"></div>
<div class="r" style="left:1423px;top:1022px;width:17px;height:18px;background:#dcdcdc"></div>
<svg style="left:357px;top:1027px" width="8" height="10"><path d="M5.5 1 L1 5 L5.5 9 Z" fill="#a3a3a3"/></svg>
<svg style="left:1411px;top:1027px" width="8" height="10"><path d="M2 1 L6.5 5 L2 9 Z" fill="#505050"/></svg>
<svg style="left:352px;top:265px;overflow:hidden" width="1071" height="757"><g transform="translate(-352,-265)" font-family="Liberation Sans, sans-serif" font-size="10.6" fill="#000"><path d="M406.5 1030 V375.5 H1430" fill="none" stroke="#6a6a6a" stroke-width="1.3"/><text x="887.3" y="314.7" text-anchor="middle" font-size="18.5" font-weight="bold">А2 Продвижение и продажи</text><path d="M416.7 488.6 H557" fill="none" stroke="#6c94d4" stroke-width="1.1"/><path d="M564.2 488.6 L556.2 484.8 L556.2 492.40000000000003 Z" fill="#4676c9"/><text x="418.3" y="485" text-anchor="start">Потенциальные клиенты</text><path d="M583.5 393.7 V403.5 M583.5 429 V443" fill="none" stroke="#6c94d4" stroke-width="1.1"/><path d="M583.5 450.8 L579.7 442.8 L587.3 442.8 Z" fill="#4676c9"/><text x="583.5" y="412.5" text-anchor="middle">Платежный</text><text x="583.5" y="425.8" text-anchor="middle">бюджет</text><path d="M658.5 393.7 V403.5 M658.5 429 V443" fill="none" stroke="#6c94d4" stroke-width="1.1"/><path d="M658.5 450.8 L654.7 442.8 L662.3 442.8 Z" fill="#4676c9"/><text x="658.5" y="412.5" text-anchor="middle">Стратегия</text><text x="658.5" y="425.8" text-anchor="middle">развития</text><path d="M847.5 393.7 V408.7 M847.5 434 V613" fill="none" stroke="#6c94d4" stroke-width="1.1"/><path d="M847.5 620.9 L843.7 612.9 L851.3 612.9 Z" fill="#4676c9"/><text x="847.5" y="417.9" text-anchor="middle">Ценовая</text><text x="847.5" y="430.9" text-anchor="middle">политика</text><path d="M677.7 488.6 H722.6 A12 12 0 0 1 734.6 500.6 V548.8 M734.6 577 V646.9 A12 12 0 0 0 746.6 658.9 H782.4" fill="none" stroke="#6c94d4" stroke-width="1.1"/><path d="M790.4 658.9 L782.4 655.1 L782.4 662.6999999999999 Z" fill="#4676c9"/><text x="734" y="559.9" text-anchor="middle">Привлеченные</text><text x="734" y="572.6" text-anchor="middle">клиенты</text><path d="M904.5 640.2 H1430" fill="none" stroke="#6c94d4" stroke-width="1.1"/><text x="1414" y="636" text-anchor="end">Неудовлетворимые потребности</text><path d="M904.5 677.9 H948.6 A12 12 0 0 1 960.6 689.9 V726 M960.6 752 V968.2 A12 12 0 0 0 972.6 980.2 H1235.8" fill="none" stroke="#6c94d4" stroke-width="1.1"/><path d="M1243.8 980.2 L1235.8 976.4000000000001 L1235.8 984.0 Z" fill="#4676c9"/><text x="962.4" y="735.8" text-anchor="middle">Потребность</text><text x="962.4" y="748.5" text-anchor="middle">клиента</text><path d="M960.6 791 V798.3 A12 12 0 0 0 972.6 810.3 H1009.3" fill="none" stroke="#6c94d4" stroke-width="1.1"/><path d="M1017.3 810.3 L1009.3 806.5 L1009.3 814.0999999999999 Z" fill="#4676c9"/><circle cx="960.6" cy="791" r="2.2" fill="#4676c9"/><path d="M1130.6 810.2 H1430" fill="none" stroke="#6c94d4" stroke-width="1.1"/><circle cx="1168.4" cy="810.2" r="2.2" fill="#4676c9"/><text x="1295.7" y="805" text-anchor="start">Договор на реализацию проекта</text><path d="M1168.4 810.2 H1175.1 A12 12 0 0 1 1187.1 822.2 V836.2 A12 12 0 0 0 1199.1 848.2 H1430" fill="none" stroke="#6c94d4" stroke-width="1.1"/><path d="M1187.1 822.2 V930.4 A12 12 0 0 0 1199.1 942.4 H1235.8" fill="none" stroke="#6c94d4" stroke-width="1.1"/><path d="M1243.8 942.4 L1235.8 938.6 L1235.8 946.1999999999999 Z" fill="#4676c9"/><path d="M1357.5 961.3 H1430" fill="none" stroke="#6c94d4" stroke-width="1.1"/><text x="1392.7" y="943.6" text-anchor="start">Информация</text><text x="1401.5" y="956.2" text-anchor="start">о проекте</text><rect x="564.2" y="450.8" width="113.39999999999998" height="75.49999999999994" fill="#e8eef8" stroke="#6f6f6f" stroke-width="1.3"/><path d="M564.2 460.8 L574.2 450.8" stroke="#6f6f6f" stroke-width="1.1"/><text x="620.9" y="479" text-anchor="middle">Привлечение</text><text x="620.9" y="492" text-anchor="middle">клиентов_Б</text><text x="671.8" y="522.5" text-anchor="end">1</text><rect x="790.4" y="620.9" width="114.10000000000002" height="75.60000000000002" fill="#e8eef8" stroke="#6f6f6f" stroke-width="1.3"/><path d="M790.4 630.9 L800.4 620.9" stroke="#6f6f6f" stroke-width="1.1"/><text x="847.4" y="642.8" text-anchor="middle">Определение</text><text x="847.4" y="655.5" text-anchor="middle">потребностей</text><text x="847.4" y="668.5" text-anchor="middle">клиентов</text><text x="898.8" y="693.9" text-anchor="end">2</text><rect x="1017.3" y="772.4" width="113.29999999999995" height="75.5" fill="#e8eef8" stroke="#6f6f6f" stroke-width="1.3"/><path d="M1017.3 782.4 L1027.3 772.4" stroke="#6f6f6f" stroke-width="1.1"/><text x="1073.9" y="787.7" text-anchor="middle">Формирование и</text><text x="1073.9" y="800.5" text-anchor="middle">заключение</text><text x="1073.9" y="812.8" text-anchor="middle">договора с</text><text x="1073.9" y="825.6" text-anchor="middle">клиентом</text><text x="1125.4" y="844.3" text-anchor="end">3</text><rect x="1243.8" y="923.4" width="113.70000000000005" height="75.89999999999998" fill="#e8eef8" stroke="#6f6f6f" stroke-width="1.3"/><path d="M1243.8 933.4 L1253.8 923.4" stroke="#6f6f6f" stroke-width="1.1"/><text x="1300.7" y="957.5" text-anchor="middle">Инициация проекта</text><text x="1352.2" y="995.5" text-anchor="end">4</text></g></svg>
<div class="r" style="left:1444px;top:187px;width:456px;height:23px;background:linear-gradient(#6aa0ee 0%,#5a90e3 30%,#4479d2 65%,#3069c4 92%,#2a62c0 100%);border-radius:5px 5px 0 0"></div>
<div class="t " style="left:1456.3px;top:191px;font-size:12px;line-height:14px;color:#fff;font-weight:normal;text-shadow:0 1px 1px rgba(0,20,80,.35)">Обсуждение</div>
<svg style="left:1879px;top:193px" width="13" height="11"><defs><linearGradient id="cr" x1="1" y1="0" x2="0" y2="0"><stop offset="0" stop-color="#0d1f44"/><stop offset="1" stop-color="#2a62c0"/></linearGradient></defs><path d="M2.2 2 L5.9 5.4 L2.2 8.8 Z" fill="url(#cr)" stroke="#12254d" stroke-width="0.6" stroke-linejoin="round"/><path d="M7.2 2 L10.9 5.4 L7.2 8.8 Z" fill="url(#cr)" stroke="#12254d" stroke-width="0.6" stroke-linejoin="round"/></svg>
<div class="r" style="left:1444px;top:210px;width:456px;height:830px;background:#e9ede9;border-left:1px solid #d5d9d5;border-right:1px solid #d5d9d5"></div>
<div class="r" style="left:1444px;top:210px;width:456px;height:1px;background:rgba(120,100,60,.25)"></div>
<div class="r" style="left:1465px;top:237px;width:414px;height:288px;background:#f3f7f3;border:3px solid #fff;border-radius:6px;box-shadow:1px 1px 1.5px rgba(0,0,0,.38)"></div>
<div class="r" style="left:1465px;top:550px;width:414px;height:414px;background:#f3f7f3;border:3px solid #fff;border-radius:6px;box-shadow:1px 1px 1.5px rgba(0,0,0,.38)"></div>
<div class="t u" style="left:1473.3px;top:244px;font-size:12px;line-height:14px;color:#0f4cc4;font-weight:bold;">Антонов Иван Петрович</div>
<div class="t u" style="left:1621px;top:245px;font-size:11px;line-height:13px;color:#0f4cc4;font-weight:normal;">31.01.2021 07:34:54</div>
<div class="t " style="left:1473.3px;top:274px;font-size:12px;line-height:14px;color:#111;font-weight:normal;">Предлагаю Руководителя проекта добавить в список Исполнители</div>
<div class="t " style="left:1473.3px;top:287px;font-size:12px;line-height:14px;color:#111;font-weight:normal;">функции:</div>
<div class="r" style="left:1473px;top:306px;width:245px;height:58px;background:#fff"></div>
<div class="t " style="left:1477.5px;top:309px;font-size:13.25px;line-height:16px;color:#000;font-weight:bold;">Исполнители функции</div>
<div class="t " style="left:1477.5px;top:328px;font-size:13.3px;line-height:16px;color:#000;font-weight:normal;">Оргединицы, выполняющие функцию:</div>
<div class="t " style="left:1501px;top:348px;font-size:13.3px;line-height:16px;color:#000;font-weight:normal;">–</div>
<div class="t u" style="left:1529.3px;top:348px;font-size:13.3px;line-height:16px;color:#2020d8;font-weight:normal;">Отдел продаж</div>
<div class="t u" style="left:1473.3px;top:414px;font-size:11px;line-height:13px;color:#0f4cc4;font-weight:normal;">Ответить</div>
<div class="r" style="left:1498px;top:436px;width:378px;height:1px;background:#dfe2df"></div>
<div class="t u" style="left:1503.3px;top:441px;font-size:12px;line-height:14px;color:#0f4cc4;font-weight:bold;">Бабич Ирина Петровна</div>
<div class="t u" style="left:1644.3px;top:442px;font-size:11px;line-height:13px;color:#0f4cc4;font-weight:normal;">31.01.2021 07:40:34</div>
<div class="t " style="left:1503.3px;top:470px;font-size:12px;line-height:14px;color:#111;font-weight:normal;">Согласна с предложением</div>
<div class="t u" style="left:1503.3px;top:500px;font-size:11px;line-height:13px;color:#0f4cc4;font-weight:normal;">Ответить</div>
<div class="t " style="left:1478px;top:572px;font-size:14px;line-height:17px;color:#111;font-weight:normal;">Написать новое сообщение:</div>
<div class="r" style="left:1478px;top:608px;width:388px;height:271px;background:#fff;border:1px solid #cfcfcf"></div>
<div class="r" style="left:1479px;top:609px;width:386px;height:41px;background:#f8f8f8;border-bottom:1px solid #dcdcdc"></div>
<svg style="left:1494px;top:620px" width="100" height="18" viewBox="0 0 100 18"><g fill="#333">
<path d="M2.6 3 H7.6 Q11.6 3 11.6 6 Q11.6 8.2 9.6 8.8 Q12.2 9.4 12.2 12 Q12.2 15 8 15 H2.6 Z M5.6 5.3 V7.9 H7.3 Q8.7 7.9 8.7 6.6 Q8.7 5.3 7.3 5.3 Z M5.6 10 V12.7 H7.6 Q9.2 12.7 9.2 11.35 Q9.2 10 7.6 10 Z" fill-rule="evenodd"/>
<path d="M33 3 H39.3 L39 4.3 H37.6 L35.4 13.7 H36.8 L36.5 15 H30.2 L30.5 13.7 H31.9 L34.1 4.3 H32.7 Z"/>
<path d="M58.3 3 H61.2 V10.3 Q61.2 12.5 63.2 12.5 Q65.2 12.5 65.2 10.3 V3 H68.1 V10.4 Q68.1 14.9 63.2 14.9 Q58.3 14.9 58.3 10.4 Z"/><rect x="58" y="15.8" width="10.5" height="1.2"/>
<path d="M95.5 5.8 Q94.5 2.8 90.5 2.8 Q86 2.8 86 6.3 Q86 8.2 88.5 9 L91.5 10 Q93.2 10.5 93.2 11.5 Q93.2 12.8 90.9 12.8 Q88.5 12.8 88 10.8 L85.5 11.6 Q86.3 15.1 90.9 15.1 Q96 15.1 96 11.3 Q96 9.2 93 8.3 L90.2 7.5 Q88.8 7.1 88.8 6.1 Q88.8 5 90.5 5 Q92.3 5 92.8 6.5 Z"/><rect x="84.8" y="8.3" width="12.4" height="1.2"/>
</g></svg>
<div class="r" style="left:1601px;top:620px;width:1px;height:18px;background:#c8c8c8"></div>
<svg style="left:1610px;top:623px" width="16" height="12" viewBox="0 0 16 12"><rect x="1" y="3" width="9" height="6" rx="3" fill="none" stroke="#333" stroke-width="1.6"/><rect x="6" y="3" width="9" height="6" rx="3" fill="none" stroke="#333" stroke-width="1.6"/></svg>
<svg style="left:1638px;top:622px" width="17" height="15" viewBox="0 0 17 15"><rect x="1" y="3" width="8.5" height="6" rx="3" fill="none" stroke="#bbb" stroke-width="1.5"/><rect x="5.5" y="3" width="8.5" height="6" rx="3" fill="none" stroke="#bbb" stroke-width="1.5"/><path d="M9.5 9 L14.5 14 M14.5 9 L9.5 14" stroke="#bbb" stroke-width="1.4"/></svg>
<svg style="left:1666px;top:622px" width="16" height="14" viewBox="0 0 16 14"><rect x="0.8" y="0.8" width="14.4" height="12.4" fill="#333"/><rect x="2.2" y="2.2" width="11.6" height="9.6" fill="#fff"/><path d="M2.2 11.8 L2.2 10.5 L6 7 L8.5 9.5 L11 6 L13.8 9.5 L13.8 11.8 Z" fill="#333"/><circle cx="4.6" cy="4.6" r="1.3" fill="#333"/></svg>
<div class="t " style="left:1486px;top:657px;font-size:11.7px;line-height:14px;color:#222;font-weight:normal;">Готово:</div>
<div class="t " style="left:1486px;top:677px;font-size:13.3px;line-height:16px;color:#000;font-weight:bold;">Исполнители функции</div>
<div class="t " style="left:1486px;top:696px;font-size:13.3px;line-height:16px;color:#000;font-weight:normal;">Оргединицы, выполняющие функцию:</div>
<div class="t " style="left:1510px;top:716px;font-size:13.3px;line-height:16px;color:#000;font-weight:normal;">–</div>
<div class="t u" style="left:1538.5px;top:716px;font-size:13.3px;line-height:16px;color:#2020d8;font-weight:normal;">Отдел продаж</div>
<div class="t " style="left:1510px;top:734px;font-size:13.3px;line-height:16px;color:#000;font-weight:normal;">–</div>
<div class="t u" style="left:1538.5px;top:734px;font-size:13.3px;line-height:16px;color:#2020d8;font-weight:normal;">Руководитель проекта</div>
<div class="r" style="left:1479px;top:851px;width:386px;height:27px;background:#f5f5f5;border-top:1px solid #d8d8d8"></div>
<div class="t " style="left:1491px;top:859px;font-size:11px;line-height:13px;color:#333;font-weight:bold;">body</div>
<div class="t " style="left:1527px;top:859px;font-size:11px;line-height:13px;color:#333;font-weight:bold;">p</div>
<svg style="left:1851px;top:863px" width="10" height="10"><path d="M9 1 L9 9 L1 9 Z" fill="#bbb"/></svg>
<div class="t " style="left:1477.7px;top:903px;font-size:11px;line-height:13px;color:#111;font-weight:normal;">Прикрепить файл:</div>
<div class="r" style="left:1575px;top:901px;width:98px;height:18px;background:#efefef;border:1px solid #767676;border-radius:2px"></div>
<div class="t " style="left:1583px;top:904px;font-size:11px;line-height:13px;color:#111;font-weight:normal;">Выберите файл</div>
<div class="t " style="left:1677px;top:904px;font-size:11px;line-height:13px;color:#111;font-weight:normal;">Файл не выбран</div>
<div class="r" style="left:1478px;top:930px;width:67px;height:21px;background:linear-gradient(#fafafa,#e6e8e6);border:1px solid #c8ccc8;border-radius:4px;box-shadow:0 1px 1px rgba(0,0,0,.3)"></div>
<div class="t " style="left:1484px;top:935px;font-size:11px;line-height:13px;color:#3060c0;font-weight:normal;">Отправить</div>
<div class="r" style="left:1465px;top:976px;width:414px;height:1px;background:#dde1dd"></div>
</body></html>
